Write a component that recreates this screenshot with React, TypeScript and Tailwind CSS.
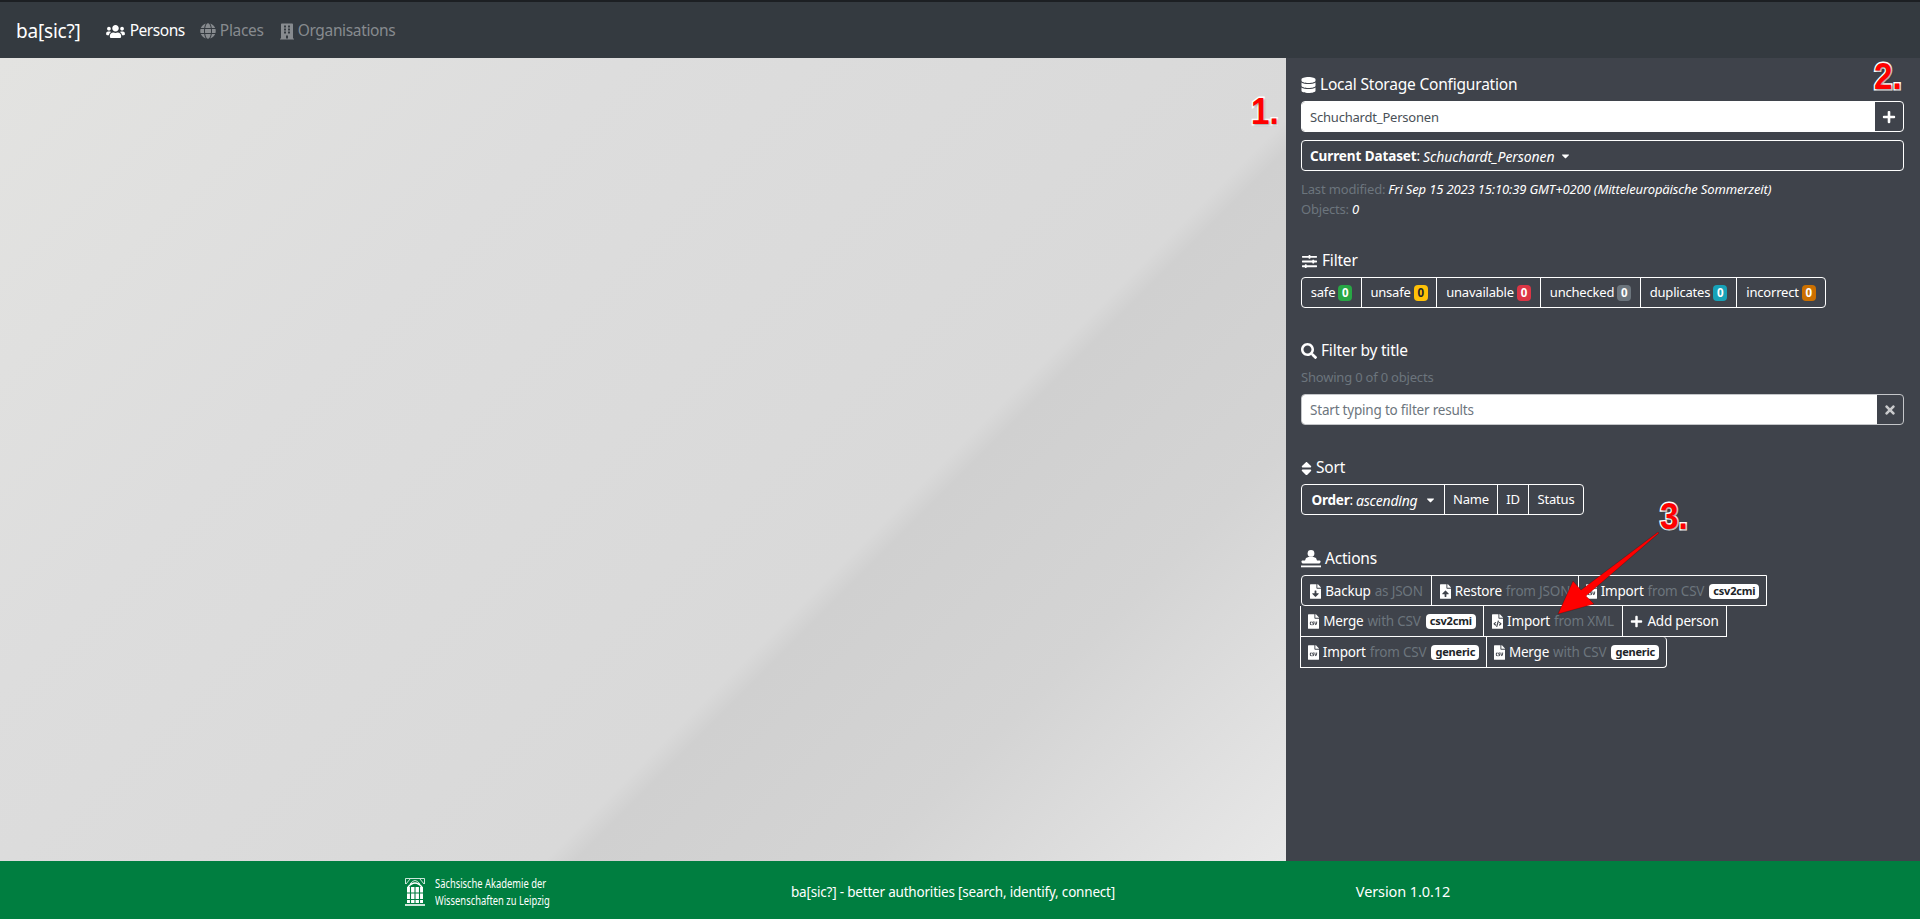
import React from "react";
import {
  FaUsers, FaGlobe, FaBuilding, FaDatabase, FaSlidersH, FaSearch, FaSort, FaPlus, FaTimes,
  FaFileDownload, FaFileUpload, FaFileCsv, FaFileCode, FaCaretDown,
} from "react-icons/fa";

const Heading = ({ icon, children, className = "" }: { icon: React.ReactNode; children: React.ReactNode; className?: string }) => (
  <div className={"flex h-6 items-center gap-[4px] text-[15.5px] text-white " + className}>
    {icon}
    <span>{children}</span>
  </div>
);

const Badge = ({ c, children }: { c: string; children: React.ReactNode }) => (
  <span className={"ml-[3px] inline-flex h-[16px] w-[14px] items-center justify-center rounded-[4px] text-[11.5px] font-bold " + c}>{children}</span>
);

const Tag = ({ children }: { children: React.ReactNode }) => (
  <span className="ml-[5px] inline-flex h-[15px] items-center rounded-[4px] bg-white px-[4px] text-[11px] font-bold text-[#212529]">{children}</span>
);

const Cell = ({ w, children, className = "" }: { w: string; children: React.ReactNode; className?: string }) => (
  <div className={"flex h-full items-center justify-center whitespace-nowrap border-r border-white pt-px last:border-r-0 " + w + " " + className}>{children}</div>
);

const Muted = ({ children }: { children: React.ReactNode }) => <span className="ml-[4px] text-[#6c757d]">{children}</span>;

const fileIcon = "mr-[4px] h-[15px] w-[11px] shrink-0 text-white";

export default function App() {
  return (
    <div className="relative flex h-[919px] w-[1920px] flex-col overflow-hidden font-['Noto_Sans','Open_Sans',sans-serif] text-[13px] tracking-[-0.2px] text-white">
      <nav className="flex h-[58px] shrink-0 items-center border-t-2 border-[#1c1f23] bg-[#343a40] pl-[16px] pt-[2px]">
        <span className="text-[19px] tracking-[-0.2px]">ba[sic?]</span>
        <div className="ml-[24px] flex items-center gap-[4px] text-[15.5px] tracking-[-0.45px]">
          <FaUsers className="h-[15px] w-[21px]" />
          <span>Persons</span>
        </div>
        <div className="ml-[15px] flex items-center gap-[4px] text-[15.5px] tracking-[-0.3px] text-[#878b8f]">
          <FaGlobe className="h-[16px] w-[16px]" />
          <span>Places</span>
        </div>
        <div className="ml-[16px] flex items-center gap-[4px] text-[15.5px] tracking-[-0.35px] text-[#878b8f]">
          <FaBuilding className="h-[17px] w-[14px]" />
          <span>Organisations</span>
        </div>
      </nav>

      <main className="flex min-h-0 flex-1">
        <div className="flex-1 bg-[linear-gradient(135deg,#e3e3e1_0%,#dddddd_30%,#d9d9d9_64.5%,#d0d0d0_66%,#d4d4d4_80%,#e8e8e8_100%)]" />
        <aside className="w-[634px] shrink-0 bg-[#3f434b] pl-[15px] pr-[16px] pt-[15px]">
          <Heading className="gap-[3px]" icon={<FaDatabase className="h-[16px] w-[15px]" />}>Local Storage Configuration</Heading>
          <div className="mt-[4px] flex h-[31px] overflow-hidden rounded-[4px] border border-white">
            <div className="flex flex-1 items-center bg-white pl-[8px] pt-[2px] text-[#495057]">Schuchardt_Personen</div>
            <div className="flex w-[28px] items-center justify-center"><FaPlus className="h-[14px] w-[14px]" /></div>
          </div>
          <div className="mt-[8px] flex h-[31px] items-center rounded-[4px] border border-white pl-[8px] pt-px text-[13.5px] tracking-[-0.1px]">
            <b>Current Dataset</b>: <i className="ml-[3px] text-[14px]">Schuchardt_Personen</i>
            <FaCaretDown className="ml-[7px] h-[12px] w-[9px]" />
          </div>
          <div className="mt-[9px] flex h-[20px] items-center text-[13px] tracking-[-0.15px] text-[#6c757d]">
            Last modified:<i className="ml-[3px] text-white">Fri Sep 15 2023 15:10:39 GMT+0200 (Mitteleuropäische Sommerzeit)</i>
          </div>
          <div className="flex h-[20px] items-center text-[13px] text-[#6c757d]">
            Objects:<i className="ml-[3px] text-white">0</i>
          </div>

          <Heading className="mt-[29px] gap-[3px]" icon={<FaSlidersH className="h-[15px] w-[17px]" />}>Filter</Heading>
          <div className="mt-[4px] flex h-[31px] w-[525px] rounded-[4px] border border-white">
            <Cell w="w-[60px]">safe<Badge c="bg-[#28a745]">0</Badge></Cell>
            <Cell w="w-[75px]">unsafe<Badge c="bg-[#ffc107] text-[#212529]">0</Badge></Cell>
            <Cell w="w-[104px]">unavailable<Badge c="bg-[#dc3545]">0</Badge></Cell>
            <Cell w="w-[100px]">unchecked<Badge c="bg-[#6c757d]">0</Badge></Cell>
            <Cell w="w-[96px]">duplicates<Badge c="bg-[#17a2b8]">0</Badge></Cell>
            <Cell w="flex-1">incorrect<Badge c="bg-[#cc7000]">0</Badge></Cell>
          </div>

          <Heading className="mt-[31px]" icon={<FaSearch className="h-[16px] w-[16px]" />}>Filter by title</Heading>
          <div className="mt-[4px] flex h-[20px] items-center pt-px text-[13px] text-[#6c757d]">Showing 0 of 0 objects</div>
          <div className="mt-[7px] flex h-[31px] overflow-hidden rounded-[4px] border border-[#c4c6c9]">
            <div className="flex flex-1 items-center bg-white pl-[8px] pt-px text-[13.5px] text-[#6c757d]">Start typing to filter results</div>
            <div className="flex w-[26px] items-center justify-center text-[#c8c9cb]"><FaTimes className="h-[14px] w-[12px]" /></div>
          </div>

          <Heading className="mt-[31px] gap-[3px]" icon={<FaSort className="h-[17px] w-[11px]" />}>Sort</Heading>
          <div className="mt-[4px] flex h-[31px] w-[283px] rounded-[4px] border border-white">
            <Cell w="w-[143px]" className="text-[13.5px]"><b>Order</b>:<i className="ml-[3px] text-[14px]">ascending</i><FaCaretDown className="ml-[8px] h-[12px] w-[9px]" /></Cell>
            <Cell w="w-[53px]">Name</Cell>
            <Cell w="w-[31px]">ID</Cell>
            <Cell w="flex-1">Status</Cell>
          </div>

          <Heading className="mt-[32px]" icon={
            <svg viewBox="0 0 20 18" className="h-[18px] w-[20px]" fill="white">
              <circle cx="10" cy="3.4" r="3.4" />
              <path d="M5 8Q10 5.5 15 8L16 10.5H19Q20.5 12 18.5 13.5H1.5Q-0.5 12 1 10.5H4Z" />
              <rect x="0" y="15.5" width="20" height="1.8" />
            </svg>
          }>Actions</Heading>
          <div className="mt-[4px] flex flex-col text-[13.5px]">
            <div className="flex h-[31px] w-[466px] rounded-l-[4px] border border-white">
              <Cell w="w-[130px]"><FaFileDownload className={fileIcon} />Backup<Muted>as JSON</Muted></Cell>
              <Cell w="w-[147px]"><FaFileUpload className={fileIcon} />Restore<Muted>from JSON</Muted></Cell>
              <Cell w="flex-1"><FaFileCsv className={fileIcon} />Import<Muted>from CSV</Muted><Tag>csv2cmi</Tag></Cell>
            </div>
            <div className="-ml-px flex h-[31px] w-[427px] border border-t-0 border-white">
              <Cell w="w-[183px]"><FaFileCsv className={fileIcon} />Merge<Muted>with CSV</Muted><Tag>csv2cmi</Tag></Cell>
              <Cell w="w-[139px]"><FaFileCode className={fileIcon} />Import<Muted>from XML</Muted></Cell>
              <Cell w="flex-1"><FaPlus className="mr-[4px] h-[13px] w-[13px]" />Add person</Cell>
            </div>
            <div className="-ml-px flex h-[31px] w-[367px] rounded-r-[4px] border border-t-0 border-white">
              <Cell w="w-[186px]"><FaFileCsv className={fileIcon} />Import<Muted>from CSV</Muted><Tag>generic</Tag></Cell>
              <Cell w="flex-1"><FaFileCsv className={fileIcon} />Merge<Muted>with CSV</Muted><Tag>generic</Tag></Cell>
            </div>
          </div>
        </aside>
      </main>

      <footer className="h-[58px] shrink-0 bg-[#007e40]">
        <div className="mx-auto grid h-full w-[1320px] grid-cols-3 items-center pt-[4px]">
          <div className="flex items-center gap-[10px] pl-[105px]">
            <svg viewBox="0 0 20 28" className="h-[28px] w-[20px]" fill="none" stroke="white">
              <path d="M0.5 6V0.5H19.5V6" strokeWidth="0.8" />
              <path d="M1 6L5 1M19 6L15 1M5 6Q10 -1 15 6" strokeWidth="0.8" />
              <path d="M3 9Q10 1 17 9" strokeWidth="1.5" />
              <path d="M2 9H18V21H2ZM2 22H18V25H2Z" fill="white" stroke="none" />
              <path d="M5.5 9V25M10 6V25M14.5 9V25M0 15H20" stroke="#007e40" strokeWidth="1.1" />
              <path d="M0 27H20" strokeWidth="1.6" />
            </svg>
            <div className="origin-left scale-x-[0.78] whitespace-nowrap text-[12px] leading-[17px] tracking-normal">
              <div>Sächsische Akademie der</div>
              <div>Wissenschaften zu Leipzig</div>
            </div>
          </div>
          <div className="whitespace-nowrap pr-[14px] text-center text-[13.5px]">ba[sic?] - better authorities [search, identify, connect]</div>
          <div className="pl-[6px] text-center text-[14.5px] tracking-[-0.1px]">Version 1.0.12</div>
        </div>
      </footer>

      <div className="pointer-events-none absolute left-[1251px] top-[85px] origin-left scale-x-[0.92] font-['Liberation_Sans',sans-serif] text-[36px] font-bold tracking-normal text-[#f00] [-webkit-text-stroke:3px_white] [paint-order:stroke_fill] [text-shadow:1px_1px_2px_rgba(0,0,0,0.4)]">1.</div>
      <div className="pointer-events-none absolute left-[1874px] top-[50px] origin-left scale-x-[0.92] font-['Liberation_Sans',sans-serif] text-[36px] font-bold tracking-normal text-[#f00] [-webkit-text-stroke:3px_white] [paint-order:stroke_fill] [text-shadow:1px_1px_2px_rgba(0,0,0,0.4)]">2.</div>
      <div className="pointer-events-none absolute left-[1660px] top-[490px] origin-left scale-x-[0.92] font-['Liberation_Sans',sans-serif] text-[36px] font-bold tracking-normal text-[#f00] [-webkit-text-stroke:3px_white] [paint-order:stroke_fill] [text-shadow:1px_1px_2px_rgba(0,0,0,0.4)]">3.</div>
      <svg className="pointer-events-none absolute left-[1550px] top-[525px] h-[95px] w-[115px]" viewBox="0 0 115 95">
        <polygon points="108,7 109,8 36,71 44,79 8,89 23,56 31,65" fill="#f00" stroke="rgba(0,0,0,0.35)" strokeWidth="0.6" />
      </svg>
    </div>
  );
}
